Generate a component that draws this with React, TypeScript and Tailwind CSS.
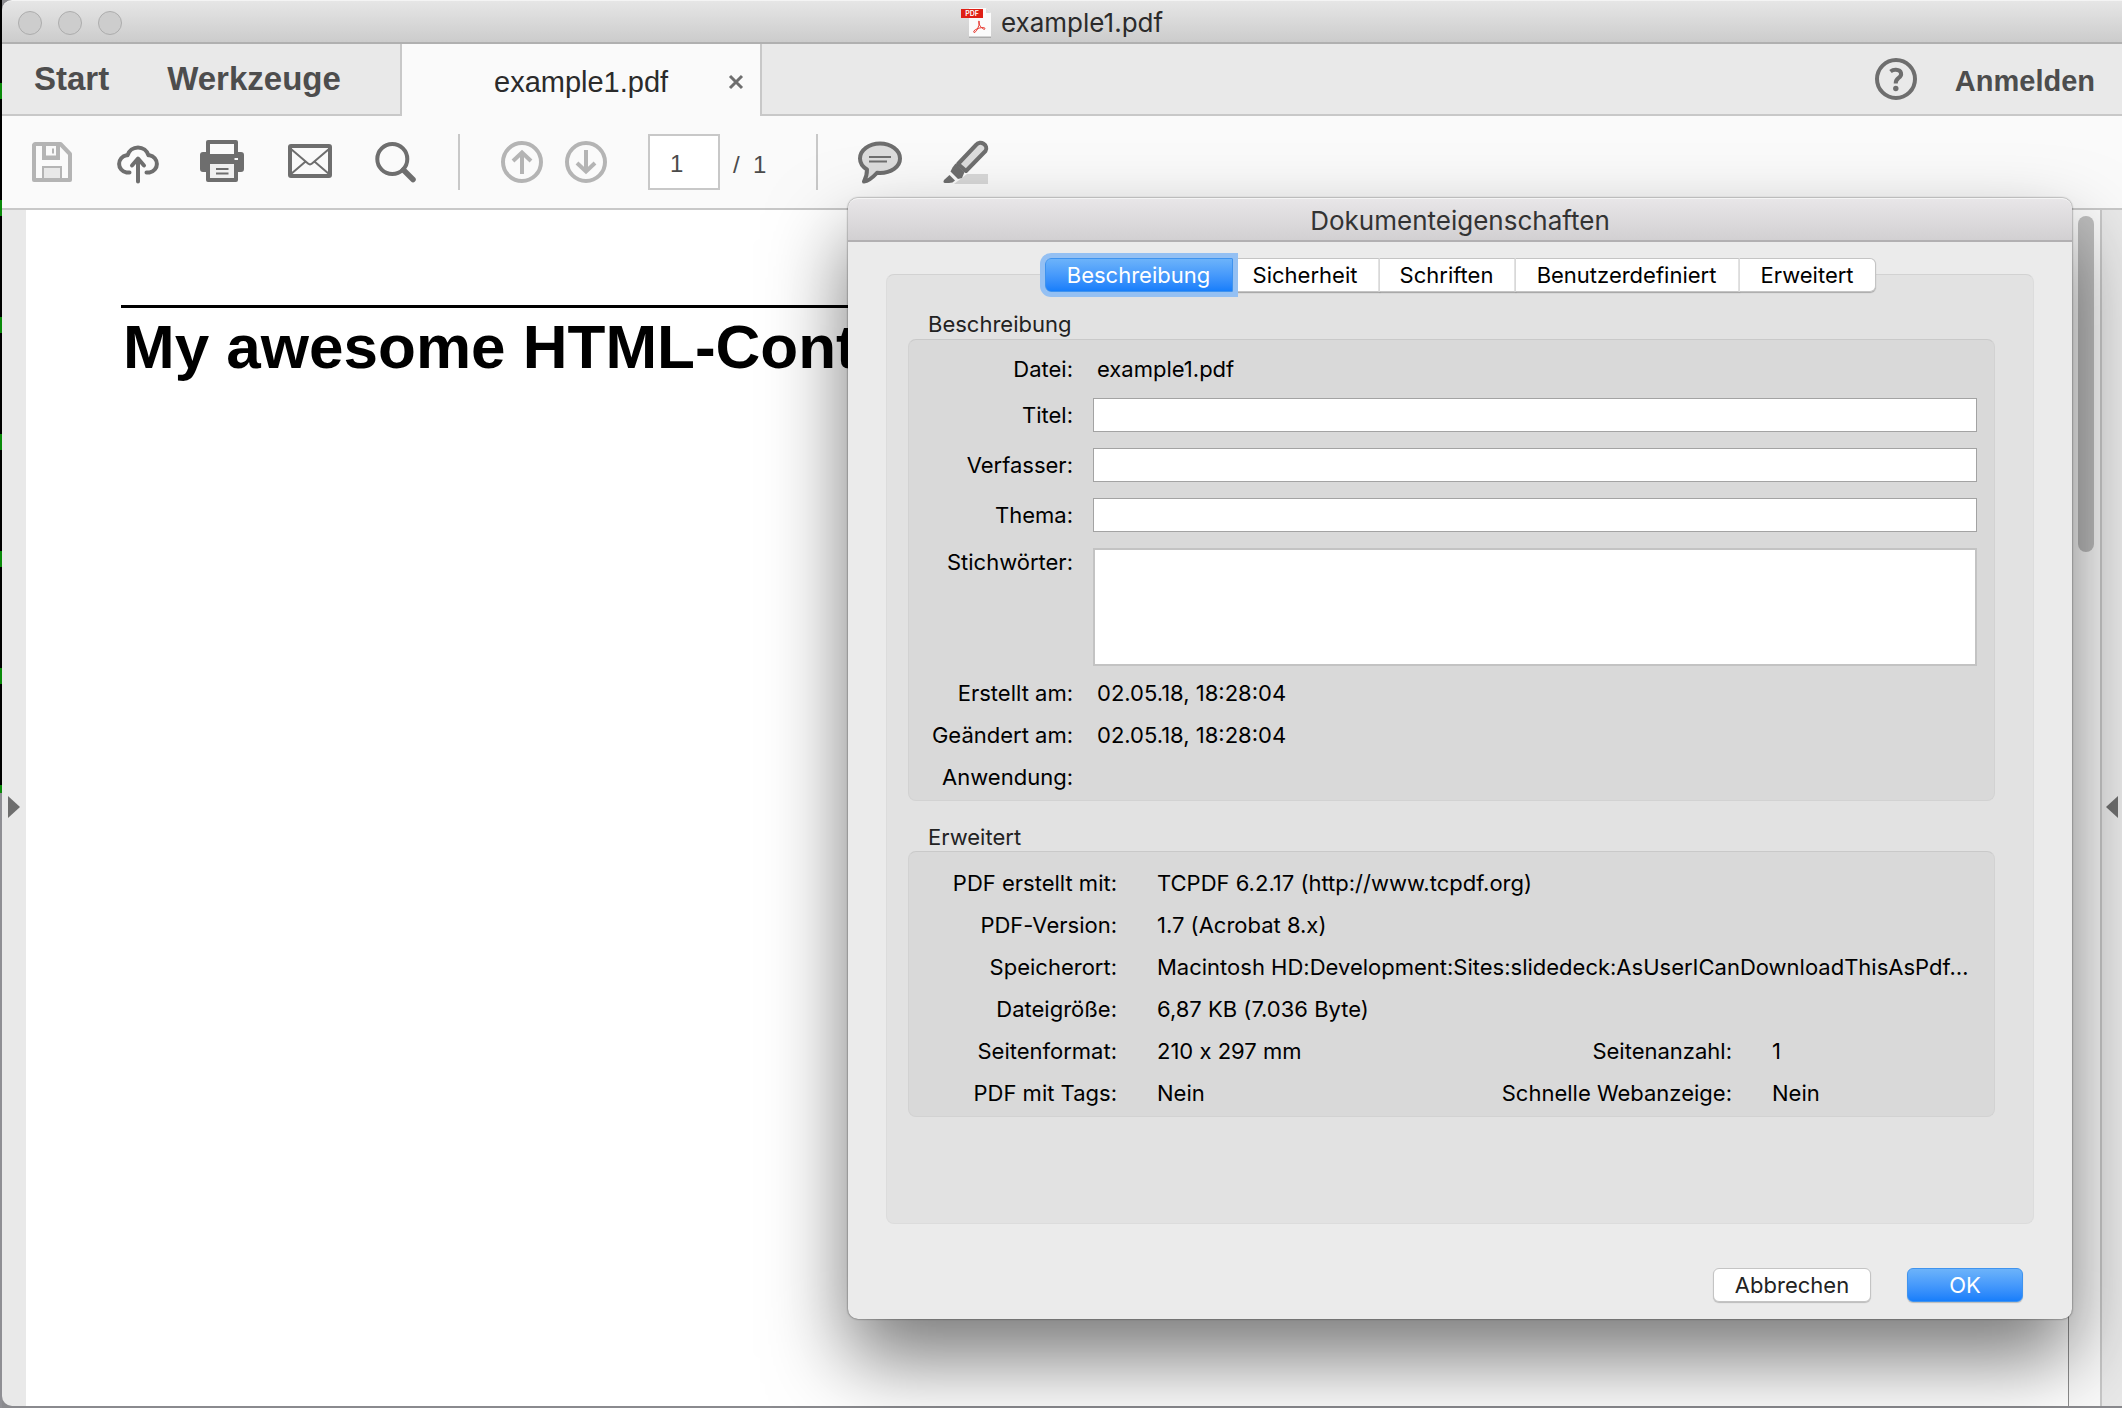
import React from "react";

const iconClass = "block size-11 overflow-visible";

function SaveIcon() {
  return (
    <svg viewBox="0 0 44 44" className={iconClass} fill="none" stroke="#b4b4b4">
      <path d="M5 4H30.5L40 14V40H4V5Z" strokeWidth="4" strokeLinejoin="round" />
      <path d="M12 4V20H30V4H26V15.5H16V4Z" fill="#b4b4b4" stroke="none" />
      <path d="M23 8.5v5" strokeWidth="2" />
      <rect x="13" y="27" width="18" height="12" fill="#e8e8e8" strokeWidth="2" />
    </svg>
  );
}

function UploadIcon() {
  return (
    <svg viewBox="0 0 44 44" className={iconClass} fill="none" stroke="#6e6e6e" strokeWidth="4" strokeLinecap="round" strokeLinejoin="round">
      <path d="M13.5 32.5H10.500a8.700 8.700 0 0 1 0-17.200L11.500 15.300A11 11.200 0 0 1 32.500 15.300H33.500a8.700 8.700 0 0 1 0 17.200H30.500" />
      <path d="M22 41.500V19M16 25.500L22 18.500L28 25.500" />
    </svg>
  );
}

function PrintIcon() {
  return (
    <svg viewBox="2 0 44 44" className={iconClass} fill="#6e6e6e">
      <path d="M8 0H36a2 2 0 0 1 2 2V12H41a3 3 0 0 1 3 3V29a3 3 0 0 1-3 3H38V40a2 2 0 0 1-2 2H8a2 2 0 0 1-2-2V32H3a3 3 0 0 1-3-3V15a3 3 0 0 1 3-3H6V2a2 2 0 0 1 2-2Z" />
      <path d="M10 4H34V14H10ZM34.500 18h3.500v2h-3.500Z" fill="#fafafa" />
      <path d="M10 24H34V38H10Z" fill="#f0f0f0" />
      <path d="M16 28h12.500v2H16ZM16 32.500h12.500v2H16Z" />
    </svg>
  );
}

function MailIcon() {
  return (
    <svg viewBox="0 0 44 44" className={iconClass} fill="none" stroke="#6e6e6e">
      <rect x="2" y="6" width="40" height="30" rx="1" strokeWidth="4" />
      <path d="M3 9L20 23.500Q22 25.200 24 23.500L41 9M3 34L17 22M41 34L27 22" strokeWidth="2" />
    </svg>
  );
}

function SearchIcon() {
  return (
    <svg viewBox="0 0 44 44" className={iconClass} fill="none" stroke="#6e6e6e">
      <circle cx="18.300" cy="19" r="15" strokeWidth="4" />
      <path d="M29.500 30L39 39.500" strokeWidth="5.500" strokeLinecap="round" />
    </svg>
  );
}

function ArrowIcon({ down = false }: { down?: boolean }) {
  return (
    <svg viewBox="0 0 44 44" className={iconClass} fill="none" stroke="#b4b4b4" strokeWidth="4">
      <circle cx="22" cy="22" r="19" />
      <path d={down ? "M22 10V32M13 23L22 31.500L31 23" : "M22 34V12M13 21L22 12.500L31 21"} />
    </svg>
  );
}

function CommentIcon() {
  return (
    <svg viewBox="0 0 44 44" className={iconClass} fill="#dcdcdc" stroke="#6e6e6e" strokeWidth="4" strokeLinejoin="round">
      <path d="M22 3.500C33 3.500 42 10 42 18.500S33 33 22 33L19 32.800C16 36 12 41 6 41.500C8 38 9 35 9 29.500C5 27 2 23 2 18.500C2 10 11 3.500 22 3.500Z" />
      <path d="M11 17H33M11 21.500H29" strokeWidth="2" />
    </svg>
  );
}

function HighlighterIcon() {
  return (
    <svg viewBox="0 0 44 44" className={iconClass} fill="#6e6e6e">
      <path d="M23 34H44V44H10Z" fill="#d8d8d8" />
      <path d="M14 24L32 5C36 -0.500 45 5 41.500 11L22 31Z" fill="#dcdcdc" stroke="#6e6e6e" strokeWidth="4" strokeLinejoin="round" />
      <path d="M11.500 23.500L20.500 32L18 38L14 39L6.500 31.500L8.500 27.500Z" />
      <path d="M5.500 35L11 40.500Q9 43 5 43H1Q-1.500 42.500 0 40Z" />
    </svg>
  );
}

function PdfFileIcon() {
  return (
    <svg viewBox="0 0 32 30" className="block h-[30px] w-8" fill="none">
      <path d="M8 1H25L30 6V30H8Z" fill="#aaaaaa" />
      <path d="M8 0H25L30 5V28.500H8Z" fill="#fbfbfb" />
      <path d="M25 0V5H30Z" fill="#dddddd" />
      <path d="M13 24.500C11.500 23 15 21 18.500 20C21.500 19.300 24.500 19.500 24 21C23 22.500 18.500 18.500 17.500 14.500C17 12.500 18.800 12.500 18.500 14.500C18 18 15.500 24.500 13 24.500Z" stroke="#e8352c" strokeWidth="1" />
      <rect y="1" width="22" height="9" fill="#df1f15" />
      <text x="11" y="8" textAnchor="middle" fontSize="7" fontWeight="600" fontFamily="Inter, sans-serif" fill="#fff">PDF</text>
    </svg>
  );
}

function ToolButton({ label, children }: { label: string; children: React.ReactNode }) {
  return (
    <button type="button" aria-label={label} className="shrink-0">
      {children}
    </button>
  );
}

function Field({ id, label }: { id: string; label: string }) {
  return (
    <div className="flex h-[34px] items-center gap-5">
      <label htmlFor={id} className="w-[164px] shrink-0 text-right">{label}</label>
      <input id={id} type="text" className="h-full min-w-0 flex-1 border border-[#a3a3a3] bg-white px-2 outline-none" />
    </div>
  );
}

function Info({ label, value }: { label: string; value: string }) {
  return (
    <div className="flex h-[42px] items-center gap-6">
      <dt className="w-[164px] shrink-0 text-right">{label}</dt>
      <dd>{value}</dd>
    </div>
  );
}

const tabs = [
  { label: "Sicherheit", width: "w-[147px]" },
  { label: "Schriften", width: "w-[136px]" },
  { label: "Benutzerdefiniert", width: "w-[224px]" },
  { label: "Erweitert", width: "w-[136px]" },
];

const details = [
  ["PDF erstellt mit:", "TCPDF 6.2.17 (http://www.tcpdf.org)"],
  ["PDF-Version:", "1.7 (Acrobat 8.x)"],
  ["Speicherort:", "Macintosh HD:Development:Sites:slidedeck:AsUserICanDownloadThisAsPdf…"],
  ["Dateigröße:", "6,87 KB (7.036 Byte)"],
  ["Seitenformat:", "210 x 297 mm", "Seitenanzahl:", "1"],
  ["PDF mit Tags:", "Nein", "Schnelle Webanzeige:", "Nein"],
];

const groupBox = "rounded-lg border border-[#d2d2d2] border-t-[#c9c9c9] bg-[#d9d9d9]";

function PropertiesDialog() {
  return (
    <section
      role="dialog"
      aria-labelledby="dialog-title"
      className="absolute top-[198px] right-[50px] w-[1224px] rounded-[10px] bg-[#ebebeb] font-[Inter,sans-serif] text-[22px] leading-7 text-black shadow-[0_40px_80px_rgba(0,0,0,0.53),0_0_2px_rgba(0,0,0,0.7)]"
    >
      <h2
        id="dialog-title"
        className="flex h-11 items-center justify-center rounded-t-[10px] border-t border-b-2 border-t-[#f4f4f4] border-b-[#b2b0b2] bg-linear-to-b from-[#e8e6e8] to-[#d2d0d2] pt-0.5 text-[26px] text-[#333]"
      >
        Dokumenteigenschaften
      </h2>

      <div className="px-[38px] pt-4 pb-[17px]">
        <div role="tablist" className="relative flex h-[34px] justify-center">
          <button
            type="button"
            role="tab"
            aria-selected="true"
            className="z-10 w-[188px] rounded-l-[6px] border border-[#3f93ee] bg-linear-to-b from-[#6cb3fa] to-[#167efb] text-white shadow-[0_0_0_5px_#94c0f3]"
          >
            Beschreibung
          </button>
          {tabs.map((tab) => (
            <button
              key={tab.label}
              type="button"
              role="tab"
              aria-selected="false"
              className={`${tab.width} border-y border-r-2 border-y-[#c4c4c4] border-r-[#e2e2e2] bg-white shadow-[0_1px_1px_rgba(0,0,0,0.25)] last:rounded-r-[6px] last:border-r last:border-r-[#c4c4c4]`}
            >
              {tab.label}
            </button>
          ))}
        </div>

        <div className="-mt-[18px] rounded-lg border border-[#dcdcdc] border-t-[#d2d2d2] bg-[#e2e2e2] pt-[35px] pr-[38px] pb-[106px] pl-[21px]">
          <h3 className="pb-px pl-5 text-[#222]">Beschreibung</h3>
          <div className={`${groupBox} pt-2 pr-[17px] pb-[2px]`}>
            <dl>
              <Info label="Datei:" value="example1.pdf" />
            </dl>
            <div className="mt-2 flex flex-col gap-4">
              <Field id="title" label="Titel:" />
              <Field id="author" label="Verfasser:" />
              <Field id="subject" label="Thema:" />
              <div className="flex h-[118px] gap-5">
                <label htmlFor="keywords" className="w-[164px] shrink-0 text-right">Stichwörter:</label>
                <textarea id="keywords" className="min-w-0 flex-1 resize-none border-2 border-[#c3c3c3] bg-white px-2 outline-none" />
              </div>
            </div>
            <dl className="mt-[6px]">
              <Info label="Erstellt am:" value="02.05.18, 18:28:04" />
              <Info label="Geändert am:" value="02.05.18, 18:28:04" />
              <Info label="Anwendung:" value="" />
            </dl>
          </div>

          <h3 className="pt-[22px] pl-5 text-[#222]">Erweitert</h3>
          <dl className={`${groupBox} pt-[10px] pb-[2px] [font-feature-settings:'calt'_0]`}>
            {details.map(([label, value, label2, value2]) => (
              <div key={label} className="flex h-[42px] items-center">
                <dt className="w-[208px] shrink-0 text-right">{label}</dt>
                <dd className="ml-10 min-w-0 flex-1 whitespace-nowrap">{value}</dd>
                {label2 && <dt className="shrink-0 text-right">{label2}</dt>}
                {value2 && <dd className="ml-10 w-[222px]">{value2}</dd>}
              </div>
            ))}
          </dl>
        </div>

        <div className="mt-11 flex justify-end gap-9 pr-[11px]">
          <button type="button" className="h-[34px] w-[158px] rounded-[6px] border border-[#c4c4c4] bg-white text-[#222] shadow-[0_1px_1px_rgba(0,0,0,0.2)]">
            Abbrechen
          </button>
          <button type="button" className="h-[34px] w-[116px] rounded-[6px] border border-[#3f93ee] bg-linear-to-b from-[#6cb3fa] to-[#167efb] text-white shadow-[0_1px_1px_rgba(0,0,0,0.2)]">
            OK
          </button>
        </div>
      </div>
    </section>
  );
}

function Desktop() {
  return (
    <div className="flex w-0.5 shrink-0 flex-col">
      <div className="h-[793px] bg-black bg-[repeating-linear-gradient(to_bottom,transparent_0_83px,#0a8a0a_83px_99px,transparent_99px_117px)]" />
      <div className="flex-1 bg-[#8f8f94]" />
    </div>
  );
}

export default function App() {
  return (
    <div className="relative flex h-screen overflow-hidden bg-[#8a8a8e] font-['Liberation_Sans',Arial,sans-serif]">
      <Desktop />
      <div className="flex min-w-0 flex-1 flex-col pb-0.5">
        <header className="flex h-11 shrink-0 items-center rounded-tl-[10px] border-t border-b-2 border-t-[#f4f4f4] border-b-[#b0b0b0] bg-linear-to-b from-[#e6e6e6] to-[#cccccc] px-4 pt-0.5">
          <div className="flex flex-1 gap-4">
            <button type="button" aria-label="Schließen" className="size-6 rounded-full border border-[#adadad] bg-[#cdcdcd]" />
            <button type="button" aria-label="Minimieren" className="size-6 rounded-full border border-[#adadad] bg-[#cdcdcd]" />
            <button type="button" aria-label="Vergrößern" className="size-6 rounded-full border border-[#adadad] bg-[#cdcdcd]" />
          </div>
          <h1 className="flex items-center gap-2 font-[Inter,sans-serif] text-[26px] leading-7 text-[#2b2b2b]">
            <PdfFileIcon />
            example1.pdf
          </h1>
          <div className="flex-1" />
        </header>

        <nav className="flex h-[72px] shrink-0 text-[29px] text-[#4d4d4d]">
          <div className="flex w-[400px] shrink-0 items-center gap-[58px] border-r-2 border-b-2 border-[#c8c8c8] bg-[#e9e9e9] pl-8 text-[33px] font-bold">
            <button type="button">Start</button>
            <button type="button">Werkzeuge</button>
          </div>
          <div className="flex w-[358px] shrink-0 items-center bg-[#fafafa] pt-1 pl-[92px] text-[#2b2b2b]">
            <span className="w-[234px] pt-0.5">example1.pdf</span>
            <button type="button" aria-label="Tab schließen">
              <svg viewBox="0 0 16 16" className="block size-4" stroke="#6e6e6e" strokeWidth="3">
                <path d="M2 2L14 14M14 2L2 14" />
              </svg>
            </button>
          </div>
          <div className="flex flex-1 items-center justify-end gap-[37px] border-b-2 border-l-2 border-[#c8c8c8] bg-[#e9e9e9] pr-[27px]">
            <button type="button" aria-label="Hilfe">
              <svg viewBox="0 0 44 44" className="block size-11" fill="none" stroke="#6e6e6e" strokeWidth="4">
                <circle cx="22" cy="22" r="19" />
                <path d="M16.500 14.500Q19 12.500 22 12.700C28 13 28.500 18.500 24.500 21Q21.700 23 21.700 26.500" />
                <circle cx="21.800" cy="31.500" r="2.700" fill="#6e6e6e" stroke="none" />
              </svg>
            </button>
            <button type="button" className="pt-1.5 font-bold">Anmelden</button>
          </div>
        </nav>

        <div className="flex h-[94px] shrink-0 items-center border-b-2 border-[#c8c8c8] bg-[#fafafa] pl-7 text-2xl text-[#4b4b4b]">
          <div className="flex gap-[42px]">
            <ToolButton label="Speichern"><SaveIcon /></ToolButton>
            <ToolButton label="Hochladen"><UploadIcon /></ToolButton>
            <ToolButton label="Drucken"><PrintIcon /></ToolButton>
            <ToolButton label="E-Mail"><MailIcon /></ToolButton>
            <ToolButton label="Suchen"><SearchIcon /></ToolButton>
          </div>
          <div className="ml-10 h-14 w-0.5 bg-[#c8c8c8]" />
          <div className="ml-10 flex gap-5">
            <ToolButton label="Vorherige Seite"><ArrowIcon /></ToolButton>
            <ToolButton label="Nächste Seite"><ArrowIcon down /></ToolButton>
          </div>
          <input aria-label="Seite" defaultValue="1" className="ml-10 h-14 w-[72px] border-2 border-[#c8c8c8] bg-white pt-1 pl-5 outline-none" />
          <span className="ml-[13px] w-[83px] whitespace-pre pt-1.5">/  1</span>
          <div className="h-14 w-0.5 bg-[#c8c8c8]" />
          <div className="ml-10 flex gap-[42px]">
            <ToolButton label="Kommentar"><CommentIcon /></ToolButton>
            <ToolButton label="Hervorheben"><HighlighterIcon /></ToolButton>
          </div>
        </div>

        <div className="flex min-h-0 flex-1">
          <button type="button" aria-label="Navigationsfenster öffnen" className="flex w-6 shrink-0 items-center rounded-bl-[10px] bg-[#e9e9e9] pb-0.5 pl-[6px]">
            <svg viewBox="0 0 12 22" className="block h-[22px] w-3" fill="#6e6e6e">
              <path d="M0 0L12 11L0 22Z" />
            </svg>
          </button>
          <main className="min-w-0 flex-1 overflow-hidden border-r border-[#8c8c8c] bg-white pt-[95px] pl-[95px]">
            <div className="border-t-[3px] border-black pt-[3px] pl-[2px] text-[62px] leading-[72px] font-bold whitespace-nowrap text-black">
              My awesome HTML-Cont
            </div>
          </main>
          <div className="w-[33px] shrink-0 border-r-2 border-[#c8c8c8] bg-[#fafafa] pt-[6px] pl-[9px]">
            <div className="h-[336px] w-4 rounded-full bg-[#bfbfbf]" />
          </div>
          <button type="button" aria-label="Werkzeugfenster öffnen" className="flex w-5 shrink-0 items-center bg-[#e9e9e9] pb-0.5 pl-1">
            <svg viewBox="0 0 12 22" className="block h-[22px] w-3" fill="#6e6e6e">
              <path d="M12 0L0 11L12 22Z" />
            </svg>
          </button>
        </div>
      </div>

      <PropertiesDialog />
    </div>
  );
}
